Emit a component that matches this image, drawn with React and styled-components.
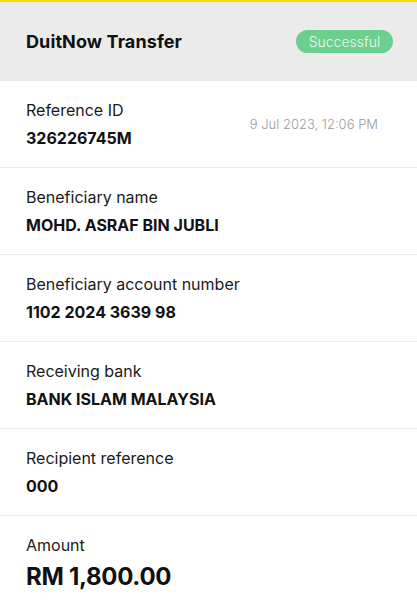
import React from "react";
import styled, { createGlobalStyle } from "styled-components";

const Global = createGlobalStyle`
  html, body { margin: 0; padding: 0; background: #fff; }
  body { font-family: Inter, "Noto Sans", "Liberation Sans", sans-serif; color: #111; }
`;

const Page = styled.div`
  border-top: 2px solid #fddc00;
  display: flex;
  flex-direction: column;
`;

const Header = styled.header`
  height: 79px;
  background: #ebebeb;
  display: flex;
  align-items: center;
  justify-content: space-between;
  padding: 0 24px 0 26px;
  box-sizing: border-box;
`;

const Title = styled.h1`
  margin: 0;
  font-size: 18px;
  font-weight: 700;
  letter-spacing: 0.1px;
  color: #111;
`;

const Badge = styled.span`
  display: inline-flex;
  align-items: center;
  justify-content: center;
  width: 97px;
  height: 23px;
  border-radius: 12px;
  background: #6bcf8e;
  color: #eafaf0;
  font-size: 14px;
  font-weight: 300;
`;

const Row = styled.div`
  display: flex;
  align-items: center;
  justify-content: space-between;
  padding: 18px 39px 18px 26px;
  border-bottom: ${(p) => (p.$last ? "none" : "1px solid #ededed")};
`;

const Field = styled.div`
  display: flex;
  flex-direction: column;
  gap: 6px;
`;

const Label = styled.div`
  font-size: 16px;
  line-height: 22px;
  font-weight: 400;
  color: #1a1a1a;
`;

const Value = styled.div`
  font-size: ${(p) => (p.$big ? "24px" : "16px")};
  line-height: ${(p) => (p.$big ? "30px" : "22px")};
  font-weight: 700;
  color: #111;
  letter-spacing: ${(p) => (p.$big ? "-0.3px" : "0")};
`;

const DateText = styled.div`
  font-size: 13px;
  font-weight: 300;
  color: #9a9a9a;
`;

const rows = [
  { label: "Beneficiary name", value: "MOHD. ASRAF BIN JUBLI" },
  { label: "Beneficiary account number", value: "1102 2024 3639 98" },
  { label: "Receiving bank", value: "BANK ISLAM MALAYSIA" },
  { label: "Recipient reference", value: "000" },
];

export default function App() {
  return (
    <Page>
      <Global />
      <Header>
        <Title>DuitNow Transfer</Title>
        <Badge>Successful</Badge>
      </Header>
      <Row>
        <Field>
          <Label>Reference ID</Label>
          <Value>326226745M</Value>
        </Field>
        <DateText>9 Jul 2023, 12:06 PM</DateText>
      </Row>
      {rows.map((r) => (
        <Row key={r.label}>
          <Field>
            <Label>{r.label}</Label>
            <Value>{r.value}</Value>
          </Field>
        </Row>
      ))}
      <Row $last>
        <Field>
          <Label>Amount</Label>
          <Value $big>RM 1,800.00</Value>
        </Field>
      </Row>
    </Page>
  );
}
